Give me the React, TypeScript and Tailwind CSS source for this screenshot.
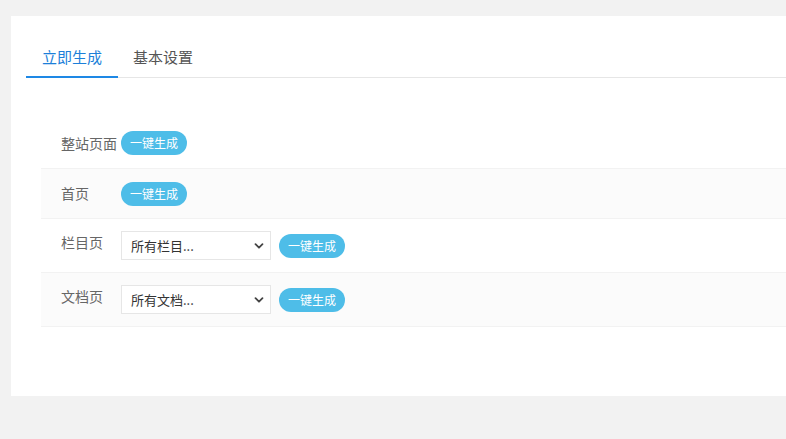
import React from 'react';

const font = { fontFamily: '"Noto Sans CJK SC", "Microsoft YaHei", sans-serif' };

const GenButton = () => (
  <button className="h-6 px-[9px] rounded-full bg-[#4ebde8] text-white text-[12px] leading-6 whitespace-nowrap">
    一键生成
  </button>
);

const Select = ({ placeholder }: { placeholder: string }) => (
  <div className="relative w-[150px] h-[29px] border border-[#e6e6e6] bg-white flex items-center pl-[9px] text-[13px] text-[#333]">
    <span>{placeholder}</span>
    <svg className="absolute right-[6px] top-1/2 -translate-y-1/2" width="10" height="10" viewBox="0 0 10 10">
      <path d="M1.5 3.2 L5 6.7 L8.5 3.2" fill="none" stroke="#444" strokeWidth="1.8" strokeLinecap="round" strokeLinejoin="round" />
    </svg>
  </div>
);

export default function App() {
  return (
    <div className="w-[786px] h-[439px] overflow-hidden bg-[#f2f2f2] pt-4 pl-[11px]" style={font}>
      <div className="w-[800px] h-[380px] bg-white pt-[21px] px-[15px]">
        {/* tabs */}
        <div className="flex h-[41px] border-b border-[#e6e6e6]">
          <div className="px-4 h-[41px] leading-[40px] text-[15px] text-[#1c7fd9] border-b-2 border-[#1e88e5] -mb-px">
            立即生成
          </div>
          <div className="px-[15px] h-10 leading-[40px] text-[15px] text-[#555]">基本设置</div>
        </div>

        {/* rows */}
        <div className="mt-10 ml-[15px] text-[14px] text-[#666]">
          <div className="flex items-center h-[51px] px-5 border-b border-[#f2f2f2]">
            <div className="w-[60px]">整站页面</div>
            <GenButton />
          </div>
          <div className="flex items-center h-[50px] px-5 bg-[#fbfbfb] border-b border-[#f2f2f2]">
            <div className="w-[60px]">首页</div>
            <GenButton />
          </div>
          <div className="flex items-start h-[54px] px-5 pt-3 border-b border-[#f2f2f2]">
            <div className="w-[60px] leading-5 mt-[1px]">栏目页</div>
            <Select placeholder="所有栏目..." />
            <div className="ml-2 mt-[3px]">
              <GenButton />
            </div>
          </div>
          <div className="flex items-start h-[54px] px-5 pt-3 bg-[#fbfbfb] border-b border-[#f2f2f2]">
            <div className="w-[60px] leading-5 mt-[1px]">文档页</div>
            <Select placeholder="所有文档..." />
            <div className="ml-2 mt-[3px]">
              <GenButton />
            </div>
          </div>
        </div>
      </div>
    </div>
  );
}
